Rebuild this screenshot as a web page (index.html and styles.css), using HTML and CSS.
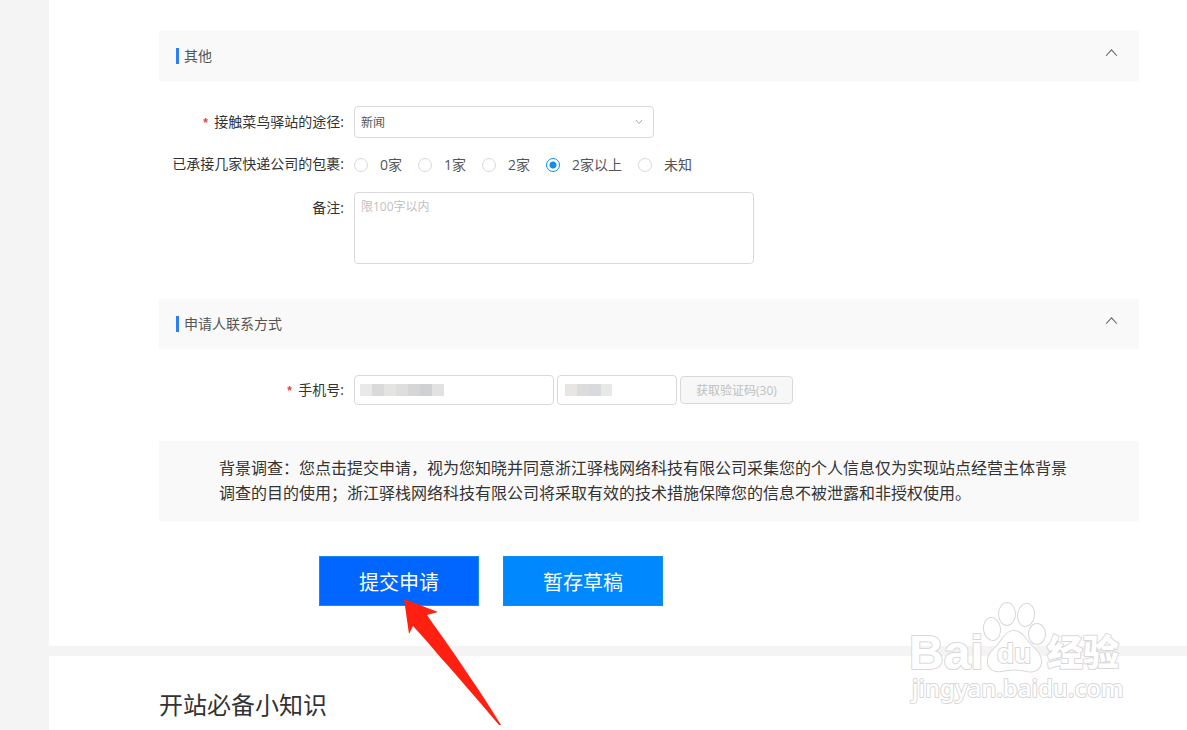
FILE: index.html
```html
<!DOCTYPE html>
<html lang="zh-CN">
<head>
<meta charset="utf-8">
<title>提交申请</title>
<link rel="stylesheet" href="styles.css">
</head>
<body>
<main class="page">
  <form class="card apply">
    <section class="group">
      <header class="group-head">
        <h2 class="group-title">其他</h2>
        <button class="toggle" type="button" aria-label="收起">
          <svg class="chevron-up" viewBox="0 0 12 8"><path d="M1 7 6 1.5 11 7"/></svg>
        </button>
      </header>
      <div class="fields">
        <div class="field">
          <label class="label required" for="source">接触菜鸟驿站的途径:</label>
          <div class="select-wrap">
            <select class="select" id="source"><option>新闻</option></select>
            <svg class="chevron-down" viewBox="0 0 8 6"><path d="M1 1 4 4.5 7 1"/></svg>
          </div>
        </div>
        <div class="field field-radios">
          <span class="label" id="count-label">已承接几家快递公司的包裹:</span>
          <div class="radios" role="radiogroup" aria-labelledby="count-label">
            <label class="radio"><input type="radio" name="count">0家</label>
            <label class="radio"><input type="radio" name="count">1家</label>
            <label class="radio"><input type="radio" name="count">2家</label>
            <label class="radio"><input type="radio" name="count" checked>2家以上</label>
            <label class="radio"><input type="radio" name="count">未知</label>
          </div>
        </div>
        <div class="field field-top">
          <label class="label" for="remark">备注:</label>
          <textarea class="textarea" id="remark" placeholder="限100字以内"></textarea>
        </div>
      </div>
    </section>

    <section class="group">
      <header class="group-head">
        <h2 class="group-title">申请人联系方式</h2>
        <button class="toggle" type="button" aria-label="收起">
          <svg class="chevron-up" viewBox="0 0 12 8"><path d="M1 7 6 1.5 11 7"/></svg>
        </button>
      </header>
      <div class="fields">
        <div class="field">
          <label class="label required" for="phone">手机号:</label>
          <div class="phone-row">
            <input class="input phone" id="phone" type="tel">
            <input class="input code" type="text" aria-label="验证码">
            <button class="code-btn" type="button" disabled>获取验证码(30)</button>
          </div>
        </div>
      </div>
    </section>

    <p class="notice">背景调查：您点击提交申请，视为您知晓并同意浙江驿栈网络科技有限公司采集您的个人信息仅为实现站点经营主体背景调查的目的使用；浙江驿栈网络科技有限公司将采取有效的技术措施保障您的信息不被泄露和非授权使用。</p>

    <div class="actions">
      <button class="btn btn-submit" type="button">提交申请</button>
      <button class="btn btn-draft" type="button">暂存草稿</button>
    </div>
  </form>

  <section class="card tips">
    <h2 class="tips-title">开站必备小知识</h2>
  </section>

  <svg class="arrow" viewBox="0 0 98 127" aria-hidden="true"><path d="M0 0 34 13 23 16Q29 25 35 33C56 63 78 95 97 126L95 126C78 106 56 80 37 59Q23 42 9 27L5 35Z"/></svg>

  <svg class="watermark" viewBox="0 0 230 116" aria-hidden="true">
    <g class="mark">
      <text class="mark-name" x="4" y="71">Bai</text>
      <ellipse cx="87" cy="31" rx="8" ry="11" transform="rotate(-8 87 31)"/>
      <ellipse cx="102" cy="16" rx="8" ry="11"/>
      <ellipse cx="121" cy="17" rx="8" ry="11" transform="rotate(8 121 17)"/>
      <ellipse cx="132" cy="36" rx="8" ry="10"/>
      <path d="M109 33C101 33 98 41 93 47C87 53 82 57 83 65C84 71 89 74 96 73C105 71 114 71 122 73C130 75 135 71 136 65C137 57 131 52 126 47C120 41 117 33 109 33Z"/>
      <text class="mark-du" x="92" y="65">du</text>
      <text class="mark-cn" x="142" y="68">经验</text>
      <text class="mark-url" x="7" y="99">jingyan.baidu.com</text>
    </g>
  </svg>
</main>
</body>
</html>
```

FILE: styles.css
```css
* {
  box-sizing: border-box;
}

body {
  margin: 0;
  background: #f4f4f4;
  color: #333;
  font: 14px/20px "Open Sans", "Noto Sans CJK SC", sans-serif;
}

button,
input,
select,
textarea {
  margin: 0;
  font-family: inherit;
}

.page {
  position: relative;
  display: flex;
  flex-direction: column;
  gap: 10px;
  min-height: 100vh;
  padding-left: 49px;
  overflow: hidden;
}

.card {
  padding: 31px 48px 40px 110px;
  background: #fff;
}

.group-head {
  display: flex;
  align-items: center;
  justify-content: space-between;
  height: 50px;
  padding: 0 21px 0 17px;
  background: #f9f9f9;
}

.group-title {
  display: flex;
  align-items: center;
  gap: 5px;
  margin: 0;
  color: #555;
  font-size: 14px;
  font-weight: 400;
}

.group-title::before {
  width: 3px;
  height: 16px;
  background: #2d7ff9;
  content: "";
}

.toggle {
  display: flex;
  padding: 0 0 8px;
  border: 0;
  background: none;
}

.chevron-up {
  width: 13px;
  height: 9px;
  fill: none;
  stroke: #666;
}

.fields {
  display: flex;
  flex-direction: column;
  gap: 16px;
  padding: 25px 0 35px;
}

.field {
  display: grid;
  grid-template-columns: 185px 1fr;
  align-items: center;
  gap: 10px;
  min-height: 32px;
}

.field-radios {
  min-height: 22px;
}

.field-radios .label {
  padding-bottom: 2px;
}

.field-top {
  align-items: start;
}

.field-top .label {
  padding-top: 6px;
}

.label {
  text-align: right;
  white-space: nowrap;
}

.required::before {
  margin-right: 5px;
  color: #f04134;
  font: 700 12px/12px "Liberation Mono", monospace;
  content: "*";
}

.select-wrap {
  position: relative;
  display: flex;
  width: 300px;
}

.select,
.input,
.textarea {
  border: 1px solid #d9d9d9;
  border-radius: 4px;
  background: #fff;
  color: #555;
  font-size: 12px;
}

.select {
  width: 100%;
  height: 32px;
  padding: 0 6px;
  appearance: none;
}

.chevron-down {
  position: absolute;
  top: 13px;
  right: 11px;
  width: 8px;
  height: 6px;
  fill: none;
  stroke: #aaa;
}

.radios {
  display: flex;
  gap: 16px;
}

.radio {
  display: flex;
  align-items: center;
  gap: 12px;
  height: 22px;
  color: #555;
}

.radio input {
  width: 14px;
  height: 14px;
  border: 1px solid #d9d9d9;
  border-radius: 50%;
  background: #fff;
  appearance: none;
}

.radio input:checked {
  border-color: #108ee9;
  background: radial-gradient(circle, #108ee9 3px, #fff 4px);
}

.textarea {
  width: 400px;
  height: 72px;
  padding: 5px 6px;
  line-height: 18px;
  resize: none;
}

.textarea::placeholder {
  color: #bfbfbf;
}

.phone-row {
  display: flex;
  align-items: center;
  gap: 3px;
}

.input {
  height: 30px;
  padding: 0 6px;
  background-repeat: no-repeat;
  background-position: 5px 8px;
}

.phone {
  width: 200px;
  background-image: linear-gradient(90deg, #eae8e9 12px, #dadadb 12px 24px, #e4e5e0 24px 36px, #dedede 36px 48px, #d7d6d6 48px 60px, #d0d1d4 60px 72px, #e2e2e2 72px);
  background-size: 84px 12px;
}

.code {
  width: 120px;
  background-image: linear-gradient(90deg, #e7e6e2 12px, #dcdcdc 12px 24px, #d9dadd 24px 36px, #e8e8e9 36px);
  background-position: 7px 8px;
  background-size: 47px 12px;
}

.code-btn {
  height: 28px;
  padding: 0 15px;
  border: 1px solid #d9d9d9;
  border-radius: 4px;
  background: #f7f7f7;
  color: #bfbfbf;
  font-size: 12px;
}

.notice {
  margin: 0;
  padding: 15px 60px;
  background: #f9f9f9;
  font-size: 16px;
  line-height: 25px;
}

.actions {
  display: flex;
  gap: 24px;
  padding: 35px 0 0 160px;
}

.btn {
  width: 160px;
  height: 50px;
  border: 1px solid #108ee9;
  color: #fff;
  font-size: 20px;
}

.btn-submit {
  background: #06f;
}

.btn-draft {
  background: #08f;
}

.tips {
  flex: 1;
  padding-bottom: 0;
}

.tips-title {
  margin: 0;
  font-size: 24px;
  font-weight: 400;
  line-height: 36px;
}

.arrow {
  position: absolute;
  top: 599px;
  left: 404px;
  width: 98px;
  height: 127px;
  fill: #ff2012;
}

.watermark {
  position: absolute;
  top: 598px;
  right: 52px;
  width: 230px;
  height: 116px;
}

.mark {
  fill: #fff;
  stroke: #d8d8d8;
  stroke-width: 2px;
  stroke-linejoin: round;
  paint-order: stroke;
}

.mark-name,
.mark-du {
  font: 700 48px "Liberation Sans", sans-serif;
}

.mark-du {
  font-size: 28px;
}

.mark-cn {
  font: 900 36px "Noto Sans CJK SC", sans-serif;
}

.mark-url {
  font: 500 24px "Noto Sans", sans-serif;
}
```
